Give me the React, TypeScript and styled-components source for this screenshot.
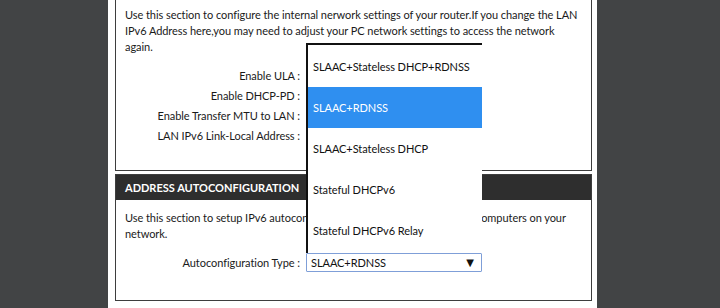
import React from "react";
import styled, { createGlobalStyle } from "styled-components";

const OPTIONS = [
  "SLAAC+Stateless DHCP+RDNSS",
  "SLAAC+RDNSS",
  "SLAAC+Stateless DHCP",
  "Stateful DHCPv6",
  "Stateful DHCPv6 Relay",
];

const LAN_FIELDS = [
  "Enable ULA :",
  "Enable DHCP-PD :",
  "Enable Transfer MTU to LAN :",
  "LAN IPv6 Link-Local Address :",
];

const App = () => {
  const selected = "SLAAC+RDNSS";

  return (
    <>
      <GlobalStyle />
      <Wrapper>
        <Section $cut>
          <Description>
            Use this section to configure the internal nerwork settings of your
            router.If you change the LAN IPv6 Address here,you may need to
            adjust your PC network settings to access the network again.
          </Description>
          <Fields>
            {LAN_FIELDS.map((label) => (
              <FieldRow key={label}>
                <Label>{label}</Label>
                <Value />
              </FieldRow>
            ))}
          </Fields>
        </Section>

        <Section>
          <SectionTitle>Address Autoconfiguration</SectionTitle>
          <Description $top={10}>
            Use this section to setup IPv6 autoconfiguration to assign IP
            addresses to computers on your network.
          </Description>
          <Fields $top={11}>
            <FieldRow $height={19}>
              <Label>Autoconfiguration Type :</Label>
              <SelectWrap>
                <OptionList>
                  {OPTIONS.map((option) => (
                    <Option key={option} $active={option === selected}>
                      {option}
                    </Option>
                  ))}
                </OptionList>
                <Select>
                  <span>{selected}</span>
                  <Arrow>▼</Arrow>
                </Select>
              </SelectWrap>
            </FieldRow>
          </Fields>
        </Section>
      </Wrapper>
    </>
  );
};

const GlobalStyle = createGlobalStyle`
  html, body {
    margin: 0;
    padding: 0;
    background: #424445;
  }
  body {
    font-family: Lato, "Liberation Sans", sans-serif;
    font-size: 11px;
    letter-spacing: -0.06px;
    color: #1a1a1a;
  }
`;

const Wrapper = styled.div`
  width: 489px;
  min-height: 308px;
  margin-left: 108px;
  padding: 0 5px 0 7px;
  box-sizing: border-box;
  background: #ffffff;
  display: flex;
  flex-direction: column;
  gap: 3px;
`;

const Section = styled.div<{ $cut?: boolean }>`
  border: 1px solid #3e3e3e;
  border-top: ${(props) => (props.$cut ? "none" : "1px solid #3e3e3e")};
  padding-bottom: ${(props) => (props.$cut ? "25px" : "28px")};
  background: #ffffff;
`;

const SectionTitle = styled.div`
  height: 25px;
  line-height: 25px;
  padding: 0 9px;
  background: #2e2e2e;
  color: #ffffff;
  font-weight: 700;
  letter-spacing: 0;
  text-transform: uppercase;
`;

const Description = styled.p<{ $top?: number }>`
  margin: 0;
  padding: ${(props) => props.$top ?? 7}px 9px 0;
  line-height: 16px;
`;

const Fields = styled.div<{ $top?: number }>`
  display: flex;
  flex-direction: column;
  margin-top: ${(props) => props.$top ?? 10}px;
  padding: 0 9px;
`;

const FieldRow = styled.div<{ $height?: number }>`
  display: grid;
  grid-template-columns: 175px 1fr;
  column-gap: 6px;
  align-items: center;
  height: ${(props) => props.$height ?? 20}px;
`;

const Label = styled.span`
  text-align: right;
  white-space: nowrap;
`;

const Value = styled.span``;

const SelectWrap = styled.div`
  position: relative;
  width: 176px;
  height: 19px;
`;

const Select = styled.div`
  display: flex;
  align-items: center;
  justify-content: space-between;
  height: 100%;
  padding: 0 7px 0 4px;
  box-sizing: border-box;
  border: 1px solid #7f9fd8;
  border-radius: 1px;
  background: #ffffff;
  color: #111111;
`;

const Arrow = styled.span`
  font-family: "DejaVu Sans", sans-serif;
  font-size: 10px;
  line-height: 1;
  letter-spacing: 0;
  color: #111111;
`;

const OptionList = styled.div`
  position: absolute;
  left: 0;
  right: 0;
  bottom: 100%;
  z-index: 2;
  padding: 1px 0 2px;
  background: #ffffff;
  border-top: 2px solid #111111;
  border-left: 2px solid #111111;
`;

const Option = styled.div<{ $active?: boolean }>`
  height: 41px;
  line-height: 41px;
  padding-left: 5px;
  white-space: nowrap;
  background: ${(props) => (props.$active ? "#2f8ff0" : "transparent")};
  color: ${(props) => (props.$active ? "#ffffff" : "#111111")};
`;

export default App;
